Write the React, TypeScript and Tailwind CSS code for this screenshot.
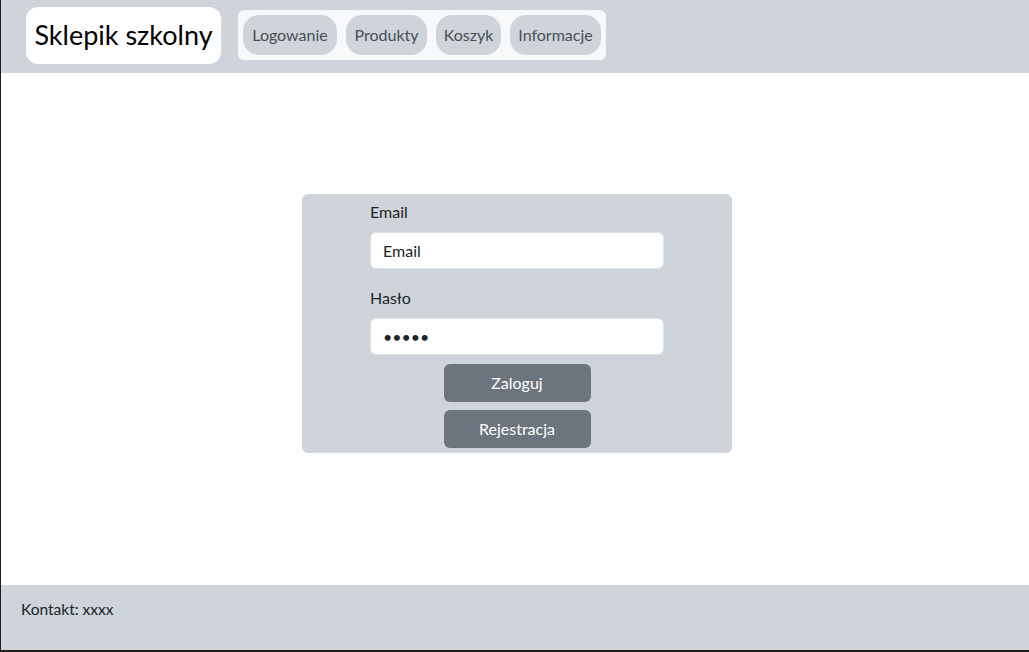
import { useState } from 'react';

const navItems = [
  { label: 'Logowanie', w: 'w-[94px]' },
  { label: 'Produkty', w: 'w-[81px]' },
  { label: 'Koszyk', w: 'w-[65px]' },
  { label: 'Informacje', w: 'w-[91px]' },
];

export default function App() {
  const [email, setEmail] = useState('');
  const [password, setPassword] = useState('12345');

  return (
    <div className="flex h-[652px] w-[1029px] flex-col overflow-hidden bg-[#1f1f1f] font-['Lato',sans-serif] text-[#212529]">
      <div className="ml-[1px] flex h-[650px] flex-col bg-white">
        <header className="flex h-[73px] items-start gap-[17px] bg-[#ced4da] pl-[25px] pt-[7px]">
          <div className="flex h-[57px] w-[195px] items-center justify-center rounded-[12px] bg-white text-[27px] text-black">
            Sklepik szkolny
          </div>
          <nav className="mt-[3px] flex h-[50px] items-center gap-[9px] rounded-[6px] bg-[#f8f9fa] px-[5px]">
            {navItems.map((item) => (
              <a
                key={item.label}
                href="#"
                className={`flex h-[40px] ${item.w} items-center justify-center rounded-[16px] bg-[#ced4da] text-[16px] text-[#495057]`}
              >
                {item.label}
              </a>
            ))}
          </nav>
        </header>

        <main className="flex flex-1 justify-center pt-[121px] pl-[4px]">
          <form
            className="flex h-[259px] w-[430px] flex-col rounded-[6px] bg-[#ced4da] px-[68px] pt-[6px]"
            onSubmit={(e) => e.preventDefault()}
          >
            <label className="block h-[24px] text-[16px] leading-[24px]">Email</label>
            <input
              type="email"
              placeholder="Email"
              value={email}
              onChange={(e) => setEmail(e.target.value)}
              className="mt-[8px] h-[37px] w-full rounded-[6px] border border-[#dee2e6] bg-white px-[12px] text-[16px] text-[#212529] outline-none placeholder:text-[#212529]"
            />
            <label className="mt-[17px] block h-[24px] text-[16px] leading-[24px]">Hasło</label>
            <input
              type="password"
              value={password}
              onChange={(e) => setPassword(e.target.value)}
              className="mt-[8px] h-[37px] w-full rounded-[6px] border border-[#dee2e6] bg-white px-[12px] text-[16px] text-[#212529] outline-none"
            />
            <div className="mt-[9px] flex flex-col items-center gap-[8px]">
              <button className="h-[38px] w-[147px] rounded-[6px] bg-[#6c757d] text-[16px] text-white">
                Zaloguj
              </button>
              <button type="button" className="h-[38px] w-[147px] rounded-[6px] bg-[#6c757d] text-[16px] text-white">
                Rejestracja
              </button>
            </div>
          </form>
        </main>

        <footer className="flex h-[65px] items-center bg-[#ced4da] pl-[20px] pb-[15px] text-[15.5px]">
          Kontakt: xxxx
        </footer>
      </div>
    </div>
  );
}
